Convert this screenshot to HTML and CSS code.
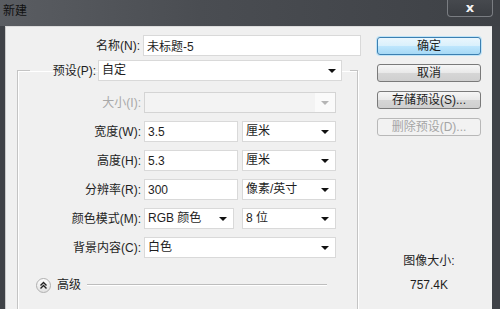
FILE: index.html
```html
<!DOCTYPE html>
<html lang="zh-CN">
<head>
    <meta charset="UTF-8">
    <meta name="viewport" content="width=device-width, initial-scale=1.0">
    <link rel="stylesheet" href="styles.css">
    <title>新建</title>
</head>
<body>
    <div class="window">
        <div class="titlebar">
            <span class="title">新建</span>
            <button class="close">x</button>
        </div>

        <div class="frame">
            <div class="client">
                <div class="main">
                    <div class="name-row">
                        <label class="label name-label">名称(N):</label>
                        <input class="field name-field" type="text" value="未标题-5" readonly>
                    </div>

                    <fieldset class="group">
                        <legend class="preset">
                            <span class="label preset-label">预设(P):</span>
                            <div class="select preset-select">自定</div>
                        </legend>

                        <div class="grid">
                            <span class="label disabled">大小(I):</span>
                            <div class="select wide disabled-select"></div>

                            <span class="label">宽度(W):</span>
                            <input class="field" type="text" value="3.5" readonly>
                            <div class="select">厘米</div>

                            <span class="label">高度(H):</span>
                            <input class="field" type="text" value="5.3" readonly>
                            <div class="select">厘米</div>

                            <span class="label">分辨率(R):</span>
                            <input class="field" type="text" value="300" readonly>
                            <div class="select">像素/英寸</div>

                            <span class="label">颜色模式(M):</span>
                            <div class="select mode">RGB 颜色</div>
                            <div class="select">8 位</div>

                            <span class="label">背景内容(C):</span>
                            <div class="select wide">白色</div>
                        </div>

                        <div class="advanced">
                            <span class="toggle">
                                <svg width="9" height="9" viewBox="0 0 9 9">
                                    <path d="M1.5 4.5 L4.5 1.5 L7.5 4.5 M1.5 7.5 L4.5 4.5 L7.5 7.5" fill="none" stroke="#222" stroke-width="1.4"/>
                                </svg>
                            </span>
                            <span class="adv-text">高级</span>
                            <div class="rule"></div>
                        </div>
                    </fieldset>
                </div>

                <div class="side">
                    <button class="btn primary">确定</button>
                    <button class="btn">取消</button>
                    <button class="btn">存储预设(S)...</button>
                    <button class="btn" disabled>删除预设(D)...</button>

                    <div class="size-info">
                        <div>图像大小:</div>
                        <div class="size-value">757.4K</div>
                    </div>
                </div>
            </div>
        </div>
    </div>
</body>
</html>
```

FILE: styles.css
```css
body {
    margin: 0;
    width: 500px;
    height: 309px;
    overflow: hidden;
    background-color: #3f4247;
    font-family: "Liberation Sans", "Noto Sans CJK SC", sans-serif;
    font-size: 12px;
    color: #1e1e1e;
}

.window {
    display: flex;
    flex-direction: column;
    height: 309px;
}

/* Title bar */
.titlebar {
    flex-shrink: 0;
    height: 26px;
    display: flex;
    justify-content: space-between;
    align-items: flex-start;
    background: linear-gradient(90deg, #5a5d62 0%, #4a4d52 40%, #3e4146 100%);
}

.title {
    margin: 4px 0 0 3px;
    line-height: 14px;
    font-size: 12px;
    color: #111;
}

.close {
    width: 46px;
    height: 17px;
    margin-right: 7px;
    padding: 0;
    border: 1px solid #7a7d82;
    border-top: none;
    border-radius: 0 0 4px 4px;
    background: linear-gradient(#46494e, #3b3e43);
    color: #f4f4f4;
    font-family: "DejaVu Sans", sans-serif;
    font-weight: bold;
    font-size: 13px;
    line-height: 14px;
}

/* Window body */
.frame {
    flex: 1;
    min-height: 0;
    overflow: hidden;
    display: flex;
    padding: 0 8px 0 5px;
}

.client {
    flex: 1;
    display: flex;
    align-items: flex-start;
    background-color: #f0f0f0;
    border-left: 1px solid #c9c9c9;
    border-top: 1px solid #dcdcdc;
}

.main {
    flex-shrink: 0;
    width: 360px;
    padding: 8px 0 0 10px;
}

.label {
    line-height: 14px;
    text-align: right;
    white-space: nowrap;
}

.label.disabled {
    color: #a8a8a8;
}

.field,
.select {
    box-sizing: border-box;
    height: 21px;
    margin: 0;
    padding: 0 3px;
    border: 1px solid #d9d9d9;
    background-color: #fff;
    font: inherit;
    color: #1e1e1e;
    line-height: 19px;
}

.field:focus {
    outline: none;
}

.select {
    position: relative;
    padding-right: 16px;
    white-space: nowrap;
}

.select::after {
    content: "";
    position: absolute;
    right: 6px;
    top: 8px;
    border-left: 4px solid transparent;
    border-right: 4px solid transparent;
    border-top: 4px solid #111;
}

/* Name row */
.name-row {
    display: flex;
    align-items: center;
    gap: 3px;
}

.name-label {
    width: 124px;
}

.name-field {
    width: 218px;
}

/* Group */
.group {
    box-sizing: border-box;
    width: 341px;
    min-inline-size: 0;
    margin: 4px 0 0 1px;
    padding: 0 21px 40px 0;
    border: 1px solid #c4c4c4;
    box-shadow: inset 1px 1px 0 #fff, 1px 1px 0 #fff;
}

.preset {
    display: flex;
    align-items: center;
    gap: 2px;
    margin-left: 12px;
    padding: 0 8px 0 0;
}

.preset-label {
    width: 66px;
}

.preset-select {
    width: 244px;
}

.preset-select::after {
    right: 5px;
}

.grid {
    display: grid;
    grid-template-columns: 122px 94px 94px;
    grid-auto-rows: 21px;
    column-gap: 4px;
    row-gap: 8px;
    align-items: center;
    padding-top: 11px;
}

.grid .label {
    margin-right: -1px;
}

.wide {
    grid-column: span 2;
}

.mode {
    width: 90px;
}

.disabled-select {
    background: linear-gradient(90deg, #f3f3f3 0, #f3f3f3 calc(100% - 20px), #fafafa calc(100% - 20px));
    border-color: #d4d4d4;
}

.disabled-select::after {
    border-top-color: #b5b5b5;
}

/* Advanced toggle */
.advanced {
    display: flex;
    align-items: center;
    width: 291px;
    margin: 19px 0 0 18px;
    height: 16px;
}

.toggle {
    flex-shrink: 0;
    width: 15px;
    height: 15px;
    box-sizing: border-box;
    border: 1px solid #b0b0b0;
    border-radius: 50%;
    background: linear-gradient(#fdfdfd, #e2e2e2);
    display: flex;
    align-items: center;
    justify-content: center;
}

.adv-text {
    margin-left: 6px;
    line-height: 14px;
}

.rule {
    flex: 1 1 auto;
    height: 0;
    margin-left: 6px;
    border-top: 1px solid #bdbdbd;
    border-bottom: 1px solid #fff;
}

/* Buttons column */
.side {
    flex-shrink: 0;
    width: 104px;
    margin-left: 1px;
    padding-top: 10px;
    display: flex;
    flex-direction: column;
    gap: 9px;
}

.btn {
    height: 18px;
    padding: 0;
    border: 1px solid #7a7a7a;
    border-radius: 3px;
    background: linear-gradient(#f6f6f6 0%, #e8e8e8 50%, #d6d6d6 51%, #cfcfcf 100%);
    font: inherit;
    color: #1e1e1e;
    line-height: 14px;
}

.btn.primary {
    border-color: #3c7fb1;
    background: linear-gradient(#eaf6fd 0%, #d9f0fc 50%, #bee6fd 51%, #a7d9f5 100%);
    box-shadow: 0 0 0 1px #bfe4f8;
}

.btn:disabled {
    border-color: #b8b8b8;
    background: #f2f2f2;
    color: #a5a5a5;
}

.size-info {
    margin-top: 109px;
    text-align: center;
    line-height: 14px;
}

.size-value {
    margin-top: 10px;
}
```
